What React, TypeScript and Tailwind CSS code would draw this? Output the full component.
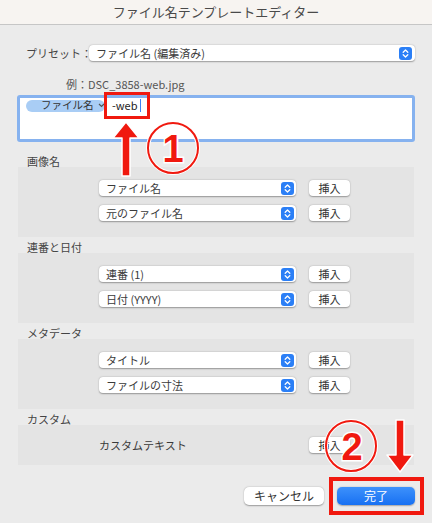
import React from "react";

function Stepper() {
  return (
    <svg width="13" height="13" viewBox="0 0 13 13" className="shrink-0">
      <rect x="0" y="0" width="13" height="13" rx="3" fill="#2b7ff6" />
      <path d="M4.2 5.2 L6.5 3 L8.8 5.2" fill="none" stroke="#fff" strokeWidth="1.3" strokeLinecap="round" strokeLinejoin="round" />
      <path d="M4.2 7.8 L6.5 10 L8.8 7.8" fill="none" stroke="#fff" strokeWidth="1.3" strokeLinecap="round" strokeLinejoin="round" />
    </svg>
  );
}

function Select({ label, className = "" }: { label: string; className?: string }) {
  return (
    <div
      className={`h-[16px] bg-white rounded-[4px] shadow-[0_0.5px_1.5px_rgba(0,0,0,0.35)] flex items-center pl-[7px] pr-[2px] text-[11px] text-[#3a3a3a] ${className}`}
    >
      <span className="flex-1 leading-none whitespace-nowrap">{label}</span>
      <Stepper />
    </div>
  );
}

function InsertButton() {
  return (
    <div className="w-[41px] h-[16px] bg-white rounded-[4px] shadow-[0_0.5px_1.5px_rgba(0,0,0,0.35)] flex items-center justify-center text-[11px] text-[#333] leading-none">
      挿入
    </div>
  );
}

function Row({ label }: { label: string }) {
  return (
    <div className="flex items-center pl-[81px] gap-[13px]">
      <Select label={label} className="w-[197px]" />
      <InsertButton />
    </div>
  );
}

function Section({ title, rows }: { title: string; rows: string[] }) {
  return (
    <div>
      <div className="h-[12px] pl-[9px] flex items-center text-[11px] text-[#444] leading-none">{title}</div>
      <div className="h-[70px] bg-[#e4e4e4] pt-[13px] flex flex-col gap-[9px]">
        {rows.map((r) => (
          <Row key={r} label={r} />
        ))}
      </div>
    </div>
  );
}

export default function App() {
  return (
    <div className="relative w-[432px] h-[523px] overflow-hidden bg-[#ebebeb] font-['Noto_Sans_CJK_JP','Noto_Sans',sans-serif]">
      {/* title bar */}
      <div className="h-[25px] bg-[#f7f4f1] border-b border-[#c6c6c6] flex items-center justify-center text-[13px] text-[#4a4a4a]">
        ファイル名テンプレートエディター
      </div>

      {/* preset */}
      <div className="mt-[20px] flex items-center pr-[17px]">
        <div className="w-[89px] pl-[26px] text-[11px] text-[#444] leading-none whitespace-nowrap">プリセット：</div>
        <Select label="ファイル名 (編集済み)" className="flex-1 pr-[3px]" />
      </div>

      {/* example */}
      <div className="mt-[16px] h-[14px] pl-[66px] flex items-center text-[11px] text-[#555] leading-none">
        例：DSC_3858-web.jpg
      </div>

      {/* token field */}
      <div className="mt-[4px] mx-[17px] h-[47px] border-[3px] border-[#86b2ef] rounded-[3px] bg-white">
        <div className="flex items-center pl-[6px] pt-[1px]">
          <div className="w-[79px] h-[12px] shrink-0 rounded-full bg-[#a9cdf5] flex items-center pl-[15px] gap-[4px] text-[10.5px] text-[#333] leading-none whitespace-nowrap">
            <span className="whitespace-nowrap">ファイル名</span>
            <svg width="7" height="5" viewBox="0 0 7 5" className="shrink-0">
              <path d="M1 1 L3.5 3.5 L6 1" fill="none" stroke="#555" strokeWidth="1.2" />
            </svg>
          </div>
          <span className="ml-[7px] text-[11px] text-[#222] leading-none">-web</span>
          <span className="ml-[2px] w-[1px] h-[13px] bg-[#3b82f6]" />
        </div>
      </div>

      {/* sections */}
      <div className="mx-[18px] mt-[13px] flex flex-col gap-[4px]">
        <Section title="画像名" rows={["ファイル名", "元のファイル名"]} />
        <Section title="連番と日付" rows={["連番 (1)", "日付 (YYYY)"]} />
        <Section title="メタデータ" rows={["タイトル", "ファイルの寸法"]} />
        <div>
          <div className="h-[12px] pl-[9px] flex items-center text-[11px] text-[#444] leading-none">カスタム</div>
          <div className="h-[40px] bg-[#e4e4e4] flex items-center pl-[81px] gap-[13px]">
            <div className="w-[197px] text-[11px] text-[#3a3a3a] leading-none">カスタムテキスト</div>
            <InsertButton />
          </div>
        </div>
      </div>

      {/* bottom buttons */}
      <div className="mt-[22px] flex justify-end pr-[17px] gap-[13px]">
        <div className="w-[80px] h-[18px] bg-white rounded-[5px] shadow-[0_0.5px_1.5px_rgba(0,0,0,0.35)] flex items-center justify-center text-[12px] text-[#333] leading-none">
          キャンセル
        </div>
        <div className="w-[78px] h-[18px] rounded-[5px] bg-gradient-to-b from-[#3d91fb] to-[#1670f2] shadow-[0_0.5px_1.5px_rgba(0,0,0,0.3)] flex items-center justify-center text-[12px] text-white leading-none">
          完了
        </div>
      </div>

      {/* annotation 1 */}
      <div className="absolute left-[104px] top-[92px] w-[46px] h-[27px] border-[3px] border-[#f0190f]" />
      <svg className="absolute left-[108px] top-[118px]" width="100" height="60" viewBox="0 0 100 60">
        <path d="M18 4 L5 20 L14 20 L14 58 L22 58 L22 20 L31 20 Z" fill="#f0190f" stroke="#fff" strokeWidth="1.5" strokeLinejoin="round" />
        <circle cx="65" cy="30" r="25" fill="none" stroke="#fff" strokeWidth="4" />
        <circle cx="65" cy="30" r="25" fill="none" stroke="#f0190f" strokeWidth="2" />
        <text x="65" y="44" textAnchor="middle" fontSize="38" fontWeight="900" fill="#f0190f" stroke="#fff" strokeWidth="3" paintOrder="stroke" fontFamily="'Liberation Sans', 'DejaVu Sans', sans-serif">1</text>
      </svg>

      {/* annotation 2 */}
      <svg className="absolute left-[322px] top-[417px]" width="100" height="60" viewBox="0 0 100 60">
        <circle cx="29" cy="29" r="25" fill="none" stroke="#fff" strokeWidth="4" />
        <circle cx="29" cy="29" r="25" fill="none" stroke="#f0190f" strokeWidth="2" />
        <text x="30" y="43" textAnchor="middle" fontSize="38" fontWeight="900" fill="#f0190f" stroke="#fff" strokeWidth="3" paintOrder="stroke" fontFamily="'Liberation Sans', 'DejaVu Sans', sans-serif">2</text>
        <path d="M74 3 L82 3 L82 38 L91 38 L78 55 L65 38 L74 38 Z" fill="#f0190f" stroke="#fff" strokeWidth="1.5" strokeLinejoin="round" />
      </svg>
      <div className="absolute left-[329px] top-[477px] w-[95px] h-[38px] border-[4px] border-[#f0190f]" />
    </div>
  );
}
